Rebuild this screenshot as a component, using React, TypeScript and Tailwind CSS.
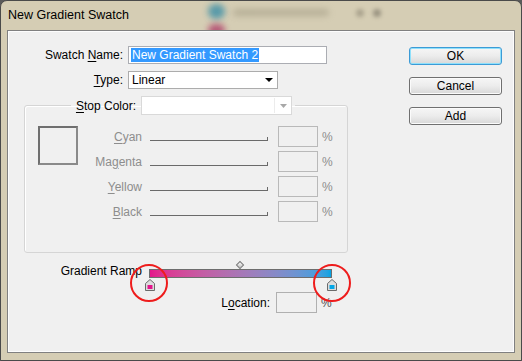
import React from 'react';

const U = ({ children }: { children: React.ReactNode }) => <span className="underline underline-offset-2">{children}</span>;

const Stop = ({ color }: { color: string }) => (
  <svg width="10" height="12" viewBox="0 0 10 12">
    <polygon points="5,0.5 9.5,4.5 9.5,11.5 0.5,11.5 0.5,4.5" fill="#dcdcdc" stroke="#6b6b6b" />
    <rect x="2.5" y="6" width="5" height="4" fill={color} />
  </svg>
);

const Button = ({ label, primary }: { label: string; primary?: boolean }) => (
  <button
    className={
      'w-[93px] h-[18px] rounded-[3px] border bg-gradient-to-b from-[#f6f6f6] via-[#ececec] to-[#d8d8d8] text-[12px] leading-none text-black ' +
      (primary ? 'border-[#3c9bd6] shadow-[inset_0_0_0_1px_#8fe0fb]' : 'border-[#707070] shadow-[inset_0_0_0_1px_#fbfbfb]')
    }
  >
    {label}
  </button>
);

const cmyk = [
  { name: 'Cyan', node: <><U>C</U>yan</> },
  { name: 'Magenta', node: <>Ma<U>g</U>enta</> },
  { name: 'Yellow', node: <><U>Y</U>ellow</> },
  { name: 'Black', node: <><U>B</U>lack</> },
];

export default function App() {
  return (
    <div className="w-[522px] h-[361px] bg-[#5a5a5a] font-['Liberation_Sans',Arial,sans-serif] text-[12px] text-black">
      <div className="relative w-full h-full rounded-t-[7px] border border-[#4a4a4a] bg-[#d5cdb4] overflow-hidden flex flex-col">
        {/* blurred desktop showing through the glass */}
        <div className="absolute left-[207px] top-[3px] w-[17px] h-[15px] rounded-full bg-[#3b8ea6] opacity-80 blur-[3px]" />
        <div className="absolute left-[207px] top-[23px] w-[17px] h-[12px] rounded-full bg-[#a8285e] opacity-70 blur-[3px]" />
        <div className="absolute left-[232px] top-[8px] w-[96px] h-[7px] rounded bg-[#a39c84] opacity-60 blur-[3px]" />
        <div className="absolute left-[355px] top-[8px] w-[8px] h-[8px] rounded-full bg-[#8c8572] opacity-60 blur-[2px]" />
        <div className="absolute left-[372px] top-[8px] w-[8px] h-[8px] rounded-full bg-[#6f6a5c] opacity-60 blur-[2px]" />

        <div className="relative h-[29px] flex items-center pl-[7px] text-[12.5px] text-black">New Gradient Swatch</div>

        <div className="relative mx-[6px] mb-[7px] flex-1 border border-[#808080] bg-[#f0f0f0] flex shadow-[inset_0_0_0_1px_#fdfdfd]">
          {/* left column */}
          <div className="w-[396px] pt-[15px] flex flex-col">
            <div className="flex items-center h-[18px]">
              <div className="w-[115px] text-right">Swatch <U>N</U>ame:</div>
              <div className="ml-[5px] w-[199px] h-[18px] border border-[#abadb3] bg-white flex items-center pl-[2px]">
                <span className="bg-[#3399ff] text-white px-[1px] leading-[14px]">New Gradient Swatch 2</span>
              </div>
            </div>

            <div className="flex items-center h-[18px] mt-[7px]">
              <div className="w-[115px] text-right"><U>T</U>ype:</div>
              <div className="ml-[5px] w-[150px] h-[18px] border border-[#acacac] bg-white flex items-center pl-[3px] justify-between pr-[4px]">
                <span>Linear</span>
                <svg width="8" height="4" viewBox="0 0 8 4"><polygon points="0,0 8,0 4,4" fill="#000" /></svg>
              </div>
            </div>

            <fieldset className="mt-[7px] ml-[16px] w-[324px] border border-[#d5d5d5] rounded-[3px] shadow-[inset_1px_1px_0_#ffffff] pl-[13px] pt-[11px] pb-[30px]">
              <legend className="ml-[33px] px-[3px] flex items-center h-[19px]">
                <span className="w-[62px] text-right whitespace-nowrap"><U>S</U>top Color:</span>
                <span className="ml-[5px] w-[151px] h-[19px] border border-[#d9d9d9] bg-white flex items-center pl-[2px]">
                  <span className="w-[131px] h-[15px] border-r border-[#ececec]" />
                  <svg className="ml-[5px]" width="7" height="4" viewBox="0 0 7 4"><polygon points="0,0 7,0 3.5,4" fill="#a8a8a8" /></svg>
                </span>
              </legend>

              <div className="flex">
                <div className="w-[40px] h-[39px] border-2 border-[#6f6f6f] border-r-[#8a8a8a] border-b-[#8a8a8a]" />
                <div className="flex flex-col gap-[4px]">
                  {cmyk.map((c) => (
                    <div key={c.name} className="flex items-center h-[21px] text-[#8d8d8d]">
                      <div className="w-[64px] text-right">{c.node}</div>
                      <div className="ml-[8px] w-[118px] h-[4px] mt-[5px] border-b border-r border-[#6a6a6a]" />
                      <div className="ml-[10px] w-[40px] h-[21px] border border-[#b9b9b9] bg-[#f0f0f0]" />
                      <div className="ml-[4px]">%</div>
                    </div>
                  ))}
                </div>
              </div>
            </fieldset>

            <div className="flex items-start h-[28px] mt-[11px]">
              <div className="w-[134px] text-right leading-[14px]">Gradient Ramp</div>
              <div className="relative ml-[7px] mt-[5px] w-[183px] h-[9px] border border-[#6d6d6d] bg-gradient-to-r from-[#e4138b] to-[#00a3e3]">
                <div className="absolute left-[87px] top-[-8px] w-[6px] h-[6px] rotate-45 border border-[#777] bg-gradient-to-br from-[#ffffff] to-[#bdbdbd]" />
                <div className="absolute left-[-5px] top-[9px]"><Stop color="#e4138b" /></div>
                <div className="absolute right-[-6px] top-[9px]"><Stop color="#05a6e6" /></div>
                <svg className="absolute left-[-21px] top-[-7px] overflow-visible" width="40" height="40" viewBox="0 0 40 40">
                  <circle cx="20" cy="20" r="18" fill="none" stroke="#ee1c1c" strokeWidth="2" />
                </svg>
                <svg className="absolute left-[162px] top-[-7px] overflow-visible" width="40" height="40" viewBox="0 0 40 40">
                  <circle cx="20" cy="20" r="18" fill="none" stroke="#ee1c1c" strokeWidth="2" />
                </svg>
              </div>
            </div>

            <div className="flex items-center h-[21px]">
              <div className="w-[262px] text-right">L<U>o</U>cation:</div>
              <div className="ml-[6px] w-[41px] h-[21px] border border-[#b0b0b0] bg-[#f0f0f0]" />
              <div className="ml-[4px] text-[#555]">%</div>
            </div>
          </div>

          {/* right column */}
          <div className="pl-[5px] pt-[16px] flex flex-col gap-[12px]">
            <Button label="OK" primary />
            <Button label="Cancel" />
            <Button label="Add" />
          </div>
        </div>
      </div>
    </div>
  );
}
